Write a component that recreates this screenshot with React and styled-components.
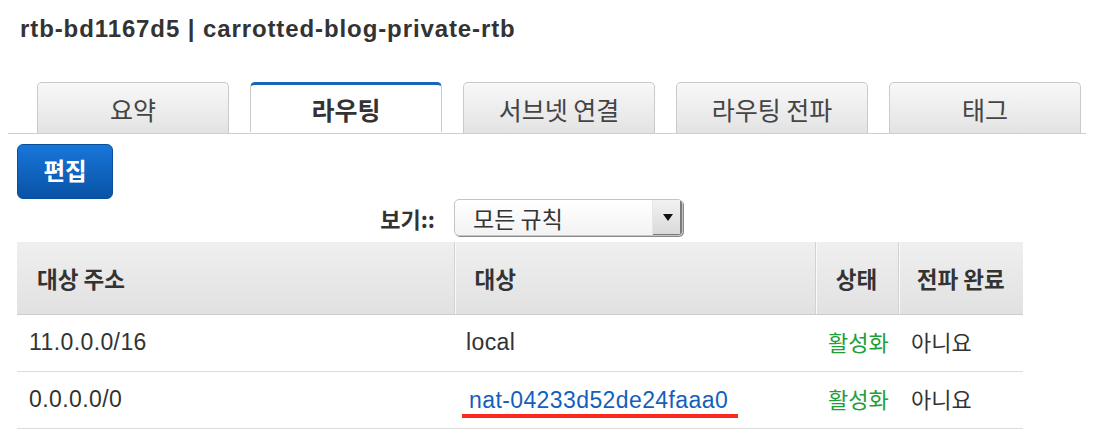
import React from "react";
import styled, { createGlobalStyle } from "styled-components";

const GlobalStyle = createGlobalStyle`
  body {
    margin: 8px;
    background: #fff;
    font-family: "Liberation Sans", "Noto Sans CJK KR", Arial, sans-serif;
    color: #333;
  }
`;

const tabs = ["요약", "라우팅", "서브넷 연결", "라우팅 전파", "태그"];

const routes = [
  { cidr: "11.0.0.0/16", target: "local", status: "활성화", propagated: "아니요" },
  {
    cidr: "0.0.0.0/0",
    target: "nat-04233d52de24faaa0",
    link: true,
    status: "활성화",
    propagated: "아니요",
  },
];

const Page = styled.div`
  width: 1086px;
`;

const Title = styled.h2`
  margin: 6px 0 0;
  padding-left: 12px;
  font-size: 24px;
  line-height: 30px;
  font-weight: bold;
  letter-spacing: 0.9px;
  color: #333;
`;

const TabStrip = styled.div`
  display: flex;
  gap: 21px;
  margin-top: 38px;
  padding-left: 29px;
  border-bottom: 1px solid #cfcfcf;
`;

const Tab = styled.div`
  width: 192px;
  height: ${(p) => (p.$active ? "50px" : "51px")};
  box-sizing: border-box;
  display: flex;
  align-items: center;
  justify-content: center;
  border: 1px solid #cacaca;
  border-bottom: none;
  border-radius: 5px 5px 0 0;
  font-family: "Noto Sans CJK KR", sans-serif;
  font-size: 25px;
  color: ${(p) => (p.$active ? "#333" : "#444")};
  font-weight: ${(p) => (p.$active ? "bold" : "normal")};
  background: ${(p) =>
    p.$active ? "#fff" : "linear-gradient(#f8f8f8, #e3e3e3)"};
  border-top: ${(p) => (p.$active ? "3px solid #1766b8" : "1px solid #cacaca")};
  margin-bottom: ${(p) => (p.$active ? "-1px" : "0")};
  padding-top: ${(p) => (p.$active ? "0" : "2px")};
`;

const Toolbar = styled.div`
  margin-top: 10px;
  padding-left: 9px;
`;

const EditButton = styled.button`
  width: 96px;
  height: 55px;
  border: 1px solid #0a4f9c;
  border-radius: 6px;
  background: linear-gradient(#1876d9, #0953a6);
  color: #fff;
  font-family: "Noto Sans CJK KR", sans-serif;
  font-weight: bold;
  font-size: 23.5px;
  padding: 0 0 3px;
`;

const FilterBar = styled.div`
  display: flex;
  justify-content: flex-end;
  align-items: center;
  gap: 19px;
  width: 675px;
  height: 37px;
`;

const FilterLabel = styled.span`
  font-family: "Noto Sans CJK KR", sans-serif;
  font-weight: bold;
  font-size: 22px;
  color: #333;
`;

const SelectBox = styled.div`
  display: flex;
  width: 229px;
  height: 37px;
  box-sizing: border-box;
  border: 1px solid #c4c4c4;
  border-radius: 5px;
  overflow: hidden;
  background: linear-gradient(#fff, #f3f3f3);
  box-shadow: 1px 1px 0 #8a8a8a;
`;

const SelectValue = styled.span`
  flex: 1;
  display: flex;
  align-items: center;
  padding-left: 18px;
  font-family: "Noto Sans CJK KR", sans-serif;
  font-size: 23px;
  color: #333;
`;

const SelectArrow = styled.span`
  width: 29px;
  display: flex;
  align-items: center;
  justify-content: center;
  background: linear-gradient(#f2f2f2, #d9d9d9);
  border-left: 1px solid #e6e6e6;
  box-shadow: inset -2px -1px 0 #7a7a7a;
`;

const Table = styled.table`
  margin: 6px 0 0 9px;
  width: 1006px;
  border-collapse: collapse;
  table-layout: fixed;
`;

const HeadCell = styled.th`
  box-sizing: border-box;
  width: ${(p) => p.$w}px;
  height: 72px;
  padding: 0 ${(p) => (p.$center ? "0" : "20px")};
  text-align: ${(p) => (p.$center ? "center" : "left")};
  background: linear-gradient(#efefef, #e1e1e1);
  border-bottom: 1px solid #cdcdcd;
  border-left: ${(p) => (p.$first ? "none" : "1px solid #d2d2d2")};
  box-shadow: ${(p) => (p.$first ? "none" : "inset 1px 0 0 #fafafa")};
  font-family: "Noto Sans CJK KR", sans-serif;
  font-size: 22.5px;
  font-weight: bold;
  color: #333;
  white-space: nowrap;
`;

const Cell = styled.td`
  box-sizing: border-box;
  height: 57px;
  padding: 0 0 ${(p) => (p.$kr ? "4px" : "0")} ${(p) => (p.$kr ? "13px" : "12px")};
  border-bottom: 1px solid #dcdcdc;
  font-size: ${(p) => (p.$kr ? "22px" : "23px")};
  letter-spacing: ${(p) => (p.$kr ? "0" : "0.4px")};
  font-family: ${(p) =>
    p.$kr
      ? '"Noto Sans CJK KR", sans-serif'
      : '"Liberation Sans", Arial, sans-serif'};
  color: ${(p) => (p.$green ? "#1e9e3a" : "#333")};
  white-space: nowrap;
`;

const Marked = styled.span`
  display: inline-block;
  margin-left: -4px;
  padding: 0 10px 3px 7px;
  border-bottom: 4px solid #ff2a1f;
  color: #135fbb;
  line-height: 22px;
  position: relative;
  top: 3px;
`;

export default function App() {
  return (
    <Page>
      <GlobalStyle />
      <Title>rtb-bd1167d5 | carrotted-blog-private-rtb</Title>
      <TabStrip>
        {tabs.map((t) => (
          <Tab key={t} $active={t === "라우팅"}>
            {t}
          </Tab>
        ))}
      </TabStrip>
      <Toolbar>
        <EditButton>편집</EditButton>
      </Toolbar>
      <FilterBar>
        <FilterLabel>보기::</FilterLabel>
        <SelectBox>
          <SelectValue>모든 규칙</SelectValue>
          <SelectArrow>
            <svg width="10" height="7" viewBox="0 0 10 7">
              <polygon points="0,0 10,0 5,7" fill="#111" />
            </svg>
          </SelectArrow>
        </SelectBox>
      </FilterBar>
      <Table>
        <thead>
          <tr>
            <HeadCell $w={437} $first>
              대상 주소
            </HeadCell>
            <HeadCell $w={361}>대상</HeadCell>
            <HeadCell $w={83} $center>
              상태
            </HeadCell>
            <HeadCell $w={125} $center>
              전파 완료
            </HeadCell>
          </tr>
        </thead>
        <tbody>
          {routes.map((r) => (
            <tr key={r.cidr}>
              <Cell>{r.cidr}</Cell>
              <Cell>{r.link ? <Marked>{r.target}</Marked> : r.target}</Cell>
              <Cell $kr $green>
                {r.status}
              </Cell>
              <Cell $kr>{r.propagated}</Cell>
            </tr>
          ))}
        </tbody>
      </Table>
    </Page>
  );
}
